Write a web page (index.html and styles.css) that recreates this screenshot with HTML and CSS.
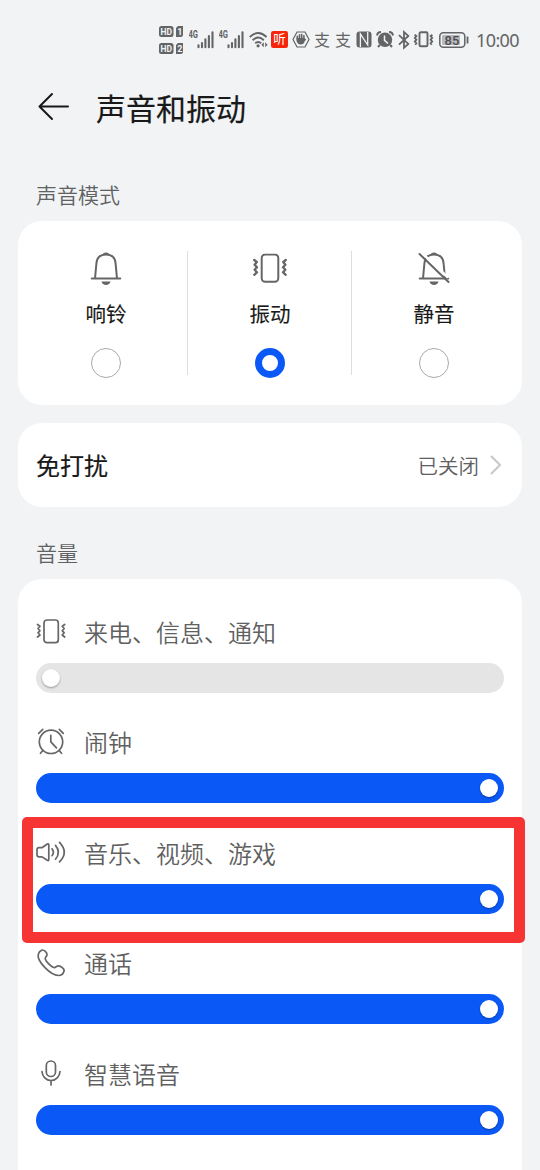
FILE: index.html
```html
<!DOCTYPE html>
<html lang="zh-CN">
<head>
<meta charset="utf-8">
<title>声音和振动</title>
<link rel="stylesheet" href="styles.css">
</head>
<body>
<svg class="defs" width="0" height="0">
  <symbol id="signal" viewBox="0 0 26 20">
    <text x="-0.5" y="8" class="tiny" textLength="9.5" lengthAdjust="spacingAndGlyphs">4G</text>
    <path d="M9.500 15.300v2M13 13v4.300M16.400 9.300v8M19.900 6v11.300M23.500 2.200v15.100" stroke="currentColor" stroke-width="2.100" stroke-linecap="round"/>
  </symbol>
  <symbol id="vibrate" viewBox="0 0 34 30">
    <rect x="8.700" y="1" width="16.600" height="27.300" rx="3.500"/>
    <path d="M1.200 6.500l2.600 2-2.200 2.700 2.400 2.500L1.600 16.300l2.400 2.400-2.700 2.600M32.800 6.500l-2.600 2 2.200 2.700-2.400 2.500 2.400 2.600-2.400 2.400 2.700 2.600" stroke-width="2.300"/>
  </symbol>
  <symbol id="bell" viewBox="0 0 32 34">
    <path d="M5.100 26.500L6.400 12.500C6.800 6.500 10.700 3.500 16 3.500s9.200 3 9.600 9l1.300 14M1.700 27.500h28.600"/>
    <path d="M12.500 3.800c.8-3 6.200-3 7 0zM11.500 30.500h9c-.7 4.600-8.300 4.600-9 0z" fill="currentColor" stroke="none"/>
  </symbol>
</svg>

<header class="status">
  <svg class="hd" width="25" height="30" viewBox="0 0 25 30">
    <g fill="#636466"><rect x="0" y="1" width="14.500" height="11" rx="2.500"/><path d="M19 1h5v8.500q0 2.500-2.500 2.500H17V3z"/><rect y="18" width="14.500" height="11" rx="2.500"/><path d="M19 18h5v8.500q0 2.500-2.500 2.500H17V20z"/></g>
    <g class="knock"><text x="1.500" y="9.900" textLength="11.500" lengthAdjust="spacingAndGlyphs">HD</text><text x="18.300" y="9.900">1</text><text x="1.500" y="26.900" textLength="11.500" lengthAdjust="spacingAndGlyphs">HD</text><text x="18.300" y="26.900">2</text></g>
  </svg>
  <svg class="sig" width="26" height="20"><use href="#signal"/></svg>
  <svg class="sig2" width="26" height="20"><use href="#signal"/></svg>
  <svg class="wifi" width="19" height="18" viewBox="0 0 19 18" fill="none" stroke="currentColor" stroke-width="1.900"><path d="M.8 6q8.400-8 16.800 0M3.600 9.200q5.600-5.200 11.200 0M6.200 12.300q3-2.700 6 0"/><circle cx="9.100" cy="14.800" r="1.600" fill="currentColor" stroke="none"/><path d="M14.800 11.200v5l-2.400-2.500zM16.200 11.200v5l2.400-2.500z" fill="currentColor" stroke="none"/></svg>
  <svg class="listen" width="17" height="17" viewBox="0 0 17 17"><rect width="17" height="17" rx="2.200" fill="#f4260e"/><text x="2.200" y="13" class="listen-text">听</text></svg>
  <svg class="hand" width="18" height="17" viewBox="0 0 18 17"><path d="M5 1h8l4 7.500-4 7.500H5L1 8.500z" fill="none" stroke="currentColor" stroke-width="1.200"/><path d="M5.300 8V5.200M7.500 8V3.700M9.700 8V3.500M11.900 8V4.700M13.300 8.500l-1 1" stroke="currentColor" stroke-width="1.600" stroke-linecap="round"/><path d="M4.500 7h8.200v3q-.6 3.500-4 3.500T4.500 9.500z" fill="currentColor"/></svg>
  <span class="pay">支</span>
  <span class="pay">支</span>
  <svg class="nfc" width="16" height="17" viewBox="0 0 16 17"><rect x=".5" y=".5" width="15" height="16" rx="3" fill="currentColor"/><path d="M4.400 16V3l7 10.500M11.700 1v13L4.600 3.500" fill="none" stroke="#f1f3f5" stroke-width="1.300"/></svg>
  <svg class="alarm" width="18" height="17" viewBox="0 0 18 17"><circle cx="9" cy="8.800" r="7.200" fill="currentColor"/><path d="M1 4.500Q1.500 1 5 1M17 4.500Q16.500 1 13 1M3.800 14l-1.800 2M14.200 14l1.800 2" fill="none" stroke="currentColor" stroke-width="2"/><path d="M8.500 4.500v4.800l3.500 3.200" fill="none" stroke="#f1f3f5" stroke-width="1.500"/></svg>
  <svg class="bt" width="12" height="18" viewBox="0 0 12 18" fill="none" stroke="currentColor" stroke-width="1.800"><path d="M1 4.200l9.300 8.700-4.300 3.900V1l4.300 3.900L1 13.600"/></svg>
  <svg class="vib" width="19" height="17" viewBox="0 0 19 17" fill="none" stroke="currentColor"><rect x="5.500" y="1.300" width="8" height="14" rx="1.300" stroke-width="1.900"/><path d="M.6 3.700l1.800 1.500L.8 6.900l1.600 1.800-1.600 1.700 1.600 1.800-1.200 1.500M18.400 3.700l-1.800 1.500 1.600 1.700-1.600 1.800 1.600 1.700-1.600 1.800 1.200 1.500" stroke-width="1.800"/></svg>
  <svg class="battery" width="30" height="16" viewBox="0 0 30 16"><rect x=".8" y=".8" width="25" height="14.400" rx="3.500" fill="none" stroke="currentColor" stroke-width="1.500"/><rect x="3" y="3" width="18" height="10" rx="1" fill="#b8b9bb"/><path d="M28.500 4.500v7" stroke="currentColor" stroke-width="1.800"/><text x="13" y="12.500" text-anchor="middle" class="level">85</text></svg>
  <time class="clock">10:00</time>
</header>

<div class="titlebar">
  <svg width="32" height="28" viewBox="0 0 32 28" fill="none" stroke="#191919" stroke-width="2" stroke-linecap="round" stroke-linejoin="round"><path d="M14 1L1.500 13.500 14 26M1.500 13.500H30"/></svg>
  <h1>声音和振动</h1>
</div>

<main>
  <h2 class="section">声音模式</h2>
  <section class="card modes">
    <div class="mode"><svg class="line" width="32" height="34"><use href="#bell"/></svg><span>响铃</span><i class="radio"></i></div>
    <div class="mode"><svg class="line" width="36" height="34" viewBox="-1 -2.500 36 34"><use href="#vibrate" width="34" height="30"/></svg><span>振动</span><i class="radio on"></i></div>
    <div class="mode"><svg class="line" width="32" height="34"><use href="#bell"/><path d="M4.500 2.500l25 23.500" stroke="#fff" stroke-width="2.500"/><path d="M1.500 3l29 28"/></svg><span>静音</span><i class="radio"></i></div>
  </section>

  <section class="card dnd">
    <strong>免打扰</strong>
    <span>已关闭</span>
    <svg width="12" height="20" viewBox="0 0 12 20" fill="none" stroke="#c8c8c8" stroke-width="2" stroke-linecap="round" stroke-linejoin="round"><path d="M1.500 1.500L10 10l-8.500 8.500"/></svg>
  </section>

  <h2 class="section volume-title">音量</h2>
  <section class="card volumes">
    <div class="volume">
      <div class="label"><svg class="line thin" width="30" height="30" viewBox="0 0 30 30"><rect x="8" y="3" width="14.300" height="22.700" rx="3"/><path d="M1.500 7.500L4 9.300 2 11.500l2 2.200-2 2.100L4 18l-2.500 2M28.700 7.500l-2.500 1.800 2 2.200-2 2.200 2 2.100-2 2.200 2.500 2"/></svg><span>来电、信息、通知</span></div>
      <div class="slider empty"><i></i></div>
    </div>
    <div class="volume">
      <div class="label"><svg class="line thin" width="30" height="30" viewBox="0 1.700 30 30"><circle cx="15" cy="15.500" r="11.700"/><path d="M14.800 9v6.500l5.700 6M2.700 7l4-4M27.300 7l-4-4M7 24l-2.500 3M23 24l2.500 3"/></svg><span>闹钟</span></div>
      <div class="slider"><i></i></div>
    </div>
    <div class="volume">
      <div class="label"><svg class="line thin" width="30" height="30" viewBox="0 .6 30 30"><path d="M1 12.500q0-2.200 2.200-2.200H6l5.300-3.700q1.500-.8 1.500 1V22q0 1.700-1.500.9L6 19.500H3.200Q1 19.500 1 17.300zM16 11.500q2.800 3.400 0 6.800M19.500 8q5.700 7 0 13.800M23.500 5q9.500 10 0 19.500"/></svg><span>音乐、视频、游戏</span></div>
      <div class="slider"><i></i></div>
      <div class="highlight"></div>
    </div>
    <div class="volume">
      <div class="label"><svg class="line thin" width="30" height="30" viewBox="0 .9 30 30"><path d="M5.500 2.200c2.400-1.300 6 2.600 5.500 4.700-.4 1.900-2.600 2.200-1.600 4.500 1 2.300 5.200 6.500 7.800 7.800 2.400 1.100 2.900-1.300 5-1.400 2.300-.2 6.700 3.300 5.800 5.300-.6 2-2.500 4.300-5.500 4.300C14.500 27 .5 13 2.300 6.300c.5-2 1.700-3.400 3.200-4.100z"/></svg><span>通话</span></div>
      <div class="slider"><i></i></div>
    </div>
    <div class="volume">
      <div class="label"><svg class="line thin" width="30" height="30" viewBox="0 1 30 30"><rect x="10.300" y="3" width="9.200" height="15.500" rx="4.600"/><path d="M6 13.500c.3 5 4 9 9 9s8.700-4 9-9M15 22.500v4.500"/></svg><span>智慧语音</span></div>
      <div class="slider"><i></i></div>
    </div>
  </section>
</main>
</body>
</html>
```
FILE: styles.css
```css
* { box-sizing: border-box; }
html, body { height: 1170px; overflow: hidden; }
body {
  margin: 0;
  background: #f1f3f5;
  color: #191919;
  font-family: "Noto Sans CJK SC", sans-serif;
}
.defs { position: absolute; }
svg { display: block; flex: none; overflow: visible; }

.status {
  display: flex;
  align-items: center;
  height: 79px;
  padding-left: 159px;
  color: #636466;
}
.hd { margin-right: 5px; }
.sig { margin-right: 4px; }
.sig2 { margin-right: 4px; }
.wifi { margin-right: 3px; }
.listen { margin-right: 4px; }
.hand { margin-right: 4px; }
.pay { width: 21px; padding-bottom: 1px; font: 400 16px/18px "Noto Sans CJK SC", sans-serif; }
.nfc { margin-right: 4px; }
.alarm { margin-right: 4px; }
.bt { margin-right: 4px; }
.vib { margin-right: 6px; }
.battery { margin-right: 7px; }
.clock { font: 18px/20px "Noto Sans", sans-serif; letter-spacing: -0.600px; }
.tiny { font: bold 10px Roboto, sans-serif; fill: currentColor; }
.knock { font: bold 9px Roboto, sans-serif; fill: #f1f3f5; }
.level { font: 500 13px Roboto, sans-serif; fill: #4c4d4f; }
.listen-text { font: 12.500px "Noto Sans CJK SC", sans-serif; fill: #fff; }

.titlebar {
  display: flex;
  align-items: center;
  gap: 26px;
  height: 55px;
  padding-left: 38px;
}
h1 { margin: 0; font-size: 30px; font-weight: 400; line-height: 44px; -webkit-text-stroke: .2px; }

main { padding: 46px 18px 0; }
.section {
  margin: -1px 0 0;
  padding-left: 18px;
  height: 42px;
  font-size: 21px;
  font-weight: 350;
  line-height: 30px;
  color: #606162;
}
.card { background: #fff; border-radius: 24px; }

.modes { display: flex; height: 184px; padding: 30px 6px; }
.mode {
  flex: 1;
  display: flex;
  flex-direction: column;
  align-items: center;
  font-size: 20.500px;
  font-weight: 400;
  -webkit-text-stroke: .12px;
}
.mode + .mode { box-shadow: -1px 0 #dedede; }
.mode span { margin: 13px 0 20px; line-height: 30px; }
.radio { width: 30px; height: 30px; border: 1.500px solid #aaa; border-radius: 50%; flex: none; }
.radio.on { border: 7.500px solid #0a59f7; }
.line { color: #666; fill: none; stroke: currentColor; stroke-width: 2; stroke-linecap: round; stroke-linejoin: round; }
.thin { stroke-width: 1.700; }

.dnd {
  display: flex;
  align-items: center;
  height: 84px;
  margin-top: 18px;
  padding: 0 20px 0 18px;
}
.dnd strong { flex: 1; margin-top: -1px; font-size: 24px; font-weight: 400; -webkit-text-stroke: .2px; }
.dnd span { margin: -1px 11px 0 0; font-size: 20.500px; font-weight: 350; color: #606060; }
.volume-title { margin-top: 30px; }

.volumes { height: 640px; padding: 38px 18px 0; }
.volume { position: relative; height: 110.500px; }
.label { display: flex; align-items: center; gap: 18px; height: 30px; margin-bottom: 15.500px; font-size: 24px; font-weight: 350; color: #606060; }
.label span { margin-top: -2px; }
.slider {
  display: flex;
  align-items: center;
  justify-content: flex-end;
  height: 30px;
  padding: 0 6px;
  border-radius: 15px;
  background: #0a59f7;
}
.slider.empty { justify-content: flex-start; background: #e5e5e5; }
.slider i { width: 18px; height: 18px; border-radius: 50%; background: #fff; box-shadow: 0 1px 2px rgba(0, 0, 0, .35); }
.highlight {
  position: absolute;
  top: -21.500px;
  left: -14px;
  width: 503px;
  height: 126px;
  border: 11px solid #f73434;
  border-radius: 5px;
}
```
